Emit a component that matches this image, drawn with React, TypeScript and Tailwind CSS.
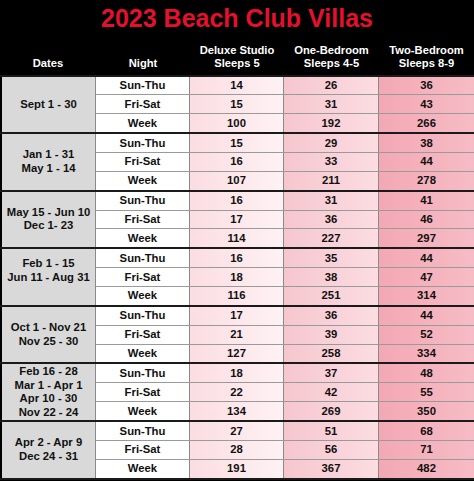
import React from 'react';

type Group = {
  dates: string[];
  rows: number[][];
  lift?: boolean;
};

const nights = ['Sun-Thu', 'Fri-Sat', 'Week'];

const groups: Group[] = [
  { dates: ['Sept 1 - 30'], rows: [[14, 26, 36], [15, 31, 43], [100, 192, 266]] },
  { dates: ['Jan 1 - 31', 'May 1 - 14'], rows: [[15, 29, 38], [16, 33, 44], [107, 211, 278]] },
  { dates: ['May 15 - Jun 10', 'Dec 1- 23'], rows: [[16, 31, 41], [17, 36, 46], [114, 227, 297]] },
  { dates: ['Feb 1 - 15', 'Jun 11 - Aug 31'], rows: [[16, 35, 44], [18, 38, 47], [116, 251, 314]], lift: true },
  { dates: ['Oct 1 - Nov 21', 'Nov 25 - 30'], rows: [[17, 36, 44], [21, 39, 52], [127, 258, 334]] },
  { dates: ['Feb 16 - 28', 'Mar 1 - Apr 1', 'Apr 10 - 30', 'Nov 22 - 24'], rows: [[18, 37, 48], [22, 42, 55], [134, 269, 350]] },
  { dates: ['Apr 2 - Apr 9', 'Dec 24 - 31'], rows: [[27, 51, 68], [28, 56, 71], [191, 367, 482]] },
];

const App: React.FC = () => {
  return (
    <div className="w-[474px] h-[481px] bg-black overflow-hidden text-[#111] font-bold" style={{ fontFamily: '"Liberation Sans", Arial, sans-serif' }}>
      {/* Title + column headers */}
      <div className="h-[74.5px] flex flex-col">
        <div className="h-[38px] pt-[6px] text-center text-[25px] leading-[25px] text-[#e5102e]">2023 Beach Club Villas</div>
        <div className="flex-1 flex items-end pb-[5px] text-white text-[11.2px] leading-[13px] text-center">
          <div className="w-[96px]">Dates</div>
          <div className="w-[94px]">Night</div>
          <div className="w-[94px]">Deluxe Studio<br />Sleeps 5</div>
          <div className="w-[95px]">One-Bedroom<br />Sleeps 4-5</div>
          <div className="w-[95px]">Two-Bedroom<br />Sleeps 8-9</div>
        </div>
      </div>

      {/* Rate table */}
      <div className="border-b-2 border-[#1a1a1a]">
        {groups.map((g, gi) => (
          <div key={gi} className="h-[57.6px] flex border-t-2 border-[#1a1a1a]">
            <div className={`w-[96px] border-l-2 border-l-black border-r border-r-[#8a8a8a] bg-[#d9d9d9] flex flex-col items-center justify-center text-[11.3px] leading-[13.6px] ${g.lift ? 'pb-[12px]' : ''}`}>
              {g.dates.map((d) => (
                <div key={d}>{d}</div>
              ))}
            </div>
            <div className="flex-1 flex flex-col">
              {g.rows.map((r, ri) => (
                <div key={ri} className={`flex-1 flex text-[11.3px] ${ri > 0 ? 'border-t border-[#9a9a9a]' : ''}`}>
                  <div className="w-[94px] bg-white border-r border-[#8a8a8a] flex items-center justify-center">{nights[ri]}</div>
                  <div className="w-[94px] bg-linear-to-r from-[#fbdde2] to-[#fef2f4] border-r border-[#8a8a8a] flex items-center justify-center">{r[0]}</div>
                  <div className="w-[95px] bg-linear-to-r from-[#f6c6ce] to-[#fbdde2] border-r border-[#8a8a8a] flex items-center justify-center">{r[1]}</div>
                  <div className="w-[95px] bg-linear-to-r from-[#f3a8b5] to-[#f6bcc5] flex items-center justify-center">{r[2]}</div>
                </div>
              ))}
            </div>
          </div>
        ))}
      </div>
    </div>
  );
};

export default App;
